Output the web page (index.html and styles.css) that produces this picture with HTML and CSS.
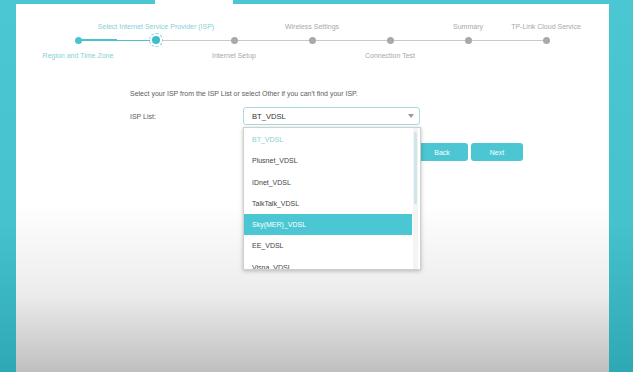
FILE: index.html
```html
<!DOCTYPE html>
<html lang="en">
<head>
    <meta charset="UTF-8">
    <meta name="viewport" content="width=device-width, initial-scale=1.0">
    <title>Quick Setup - ISP</title>
    <link rel="stylesheet" href="styles.css">
</head>
<body>
<div class="panel">
    <ol class="stepper">
        <li class="step done">
            <span class="label"></span>
            <span class="rail"><i class="dot"></i></span>
            <span class="label">Region and Time Zone</span>
        </li>
        <li class="step current">
            <span class="label">Select Internet Service Provider (ISP)</span>
            <span class="rail"><i class="dot"></i></span>
            <span class="label"></span>
        </li>
        <li class="step">
            <span class="label"></span>
            <span class="rail"><i class="dot"></i></span>
            <span class="label">Internet Setup</span>
        </li>
        <li class="step">
            <span class="label">Wireless Settings</span>
            <span class="rail"><i class="dot"></i></span>
            <span class="label"></span>
        </li>
        <li class="step">
            <span class="label"></span>
            <span class="rail"><i class="dot"></i></span>
            <span class="label">Connection Test</span>
        </li>
        <li class="step">
            <span class="label">Summary</span>
            <span class="rail"><i class="dot"></i></span>
            <span class="label"></span>
        </li>
        <li class="step">
            <span class="label">TP-Link Cloud Service</span>
            <span class="rail"><i class="dot"></i></span>
            <span class="label"></span>
        </li>
    </ol>

    <div class="form">
        <p class="hint">Select your ISP from the ISP List or select Other if you can't find your ISP.</p>
        <div class="field">
            <label class="field-label">ISP List:</label>
            <div class="select">
                <div class="select-box">
                    <span>BT_VDSL</span>
                    <svg class="caret" width="6" height="4" viewBox="0 0 6 4"><path d="M0 0h6L3 4z" fill="#9a9a9a"/></svg>
                </div>
                <div class="options">
                    <ul>
                        <li class="selected">BT_VDSL</li>
                        <li>Plusnet_VDSL</li>
                        <li>IDnet_VDSL</li>
                        <li>TalkTalk_VDSL</li>
                        <li class="hover">Sky(MER)_VDSL</li>
                        <li>EE_VDSL</li>
                        <li>Visna_VDSL</li>
                    </ul>
                    <div class="scrollbar"><span class="thumb"></span></div>
                </div>
            </div>
        </div>
        <div class="actions">
            <button class="btn">Back</button>
            <button class="btn">Next</button>
        </div>
    </div>
</div>
</body>
</html>
```

FILE: styles.css
```css
html, body {
    height: 100%;
}
body {
    margin: 0;
    overflow: hidden;
    font-family: "Liberation Sans", Arial, sans-serif;
    background: linear-gradient(to bottom, #4bc7d3 0%, #45c2ce 60%, #2ea8b4 100%);
}
.panel {
    position: relative;
    margin: 4px 24px 0 16px;
    height: calc(100% - 4px);
    background: linear-gradient(to bottom, #ffffff 0, #ffffff 200px, #ececec 290px, #bdbdbd 372px);
}
/* white tab above the current step */
.panel::before {
    content: "";
    position: absolute;
    top: -4px;
    left: 139px;
    width: 78px;
    height: 4px;
    background: #fff;
}

/* stepper */
.stepper {
    list-style: none;
    margin: 0 0 0 23px;
    padding: 18px 0 0;
    display: grid;
    grid-template-columns: repeat(7, 78px);
}
.step {
    display: flex;
    flex-direction: column;
    align-items: center;
}
.label {
    height: 10px;
    line-height: 10px;
    font-size: 7px;
    color: #a8a8a8;
    white-space: nowrap;
}
.rail {
    position: relative;
    align-self: stretch;
    height: 12px;
    margin: 2px 0 5px;
    display: flex;
    justify-content: center;
    align-items: center;
    background: linear-gradient(#c9c9c9, #c9c9c9) no-repeat center / 100% 1px;
}
.step:first-child .rail {
    background-size: 50% 1px;
    background-position: right center;
}
.step:last-child .rail {
    background-size: 50% 1px;
    background-position: left center;
}
.step.done .rail {
    background-image: linear-gradient(#4bc3cf, #4bc3cf);
    background-size: 50% 2px;
}
.step.current .rail {
    background-image: linear-gradient(to right, #4bc3cf 50%, #c9c9c9 50%);
}
.dot {
    width: 7px;
    height: 7px;
    border-radius: 50%;
    background: #a9a9a9;
}
.step.done .dot {
    background: #4bc3cf;
}
.step.current .dot {
    width: 8px;
    height: 8px;
    background: #3fbdca;
    box-shadow: 0 0 0 2px #fff;
    outline: 1px dashed #7fd2da;
    outline-offset: 2px;
    border-radius: 50%;
}
.step.done .label,
.step.current .label {
    color: #86d0d8;
}

/* form */
.form {
    margin-left: 114px;
    width: 393px;
}
.hint {
    margin: 28px 0 0;
    font-size: 7px;
    line-height: 10px;
    color: #5c5c5c;
}
.field {
    display: flex;
    align-items: center;
    margin-top: 8px;
}
.field-label {
    width: 113px;
    font-size: 7px;
    color: #5c5c5c;
}
.select {
    position: relative;
    width: 177px;
}
.select-box {
    height: 16px;
    border: 1px solid #a8dbe0;
    border-radius: 3px;
    background: #fff;
    display: flex;
    align-items: center;
    justify-content: space-between;
    padding: 0 5px 0 8px;
    font-size: 7.6px;
    color: #333;
}
.options {
    position: absolute;
    z-index: 2;
    top: 20px;
    left: 0;
    width: 176px;
    height: 141px;
    overflow: hidden;
    background: #fff;
    border: 1px solid #cfcfcf;
    box-shadow: 0 1px 4px rgba(0, 0, 0, 0.25);
}
.options ul {
    list-style: none;
    margin: 0;
    padding: 1px 8px 0 0;
}
.options li {
    height: 21.3px;
    line-height: 21.3px;
    padding-left: 8px;
    font-size: 7px;
    color: #444;
}
.options li.selected {
    color: #86d0d8;
}
.options li.hover {
    background: #4bc7d3;
    color: #fff;
}
.scrollbar {
    position: absolute;
    top: 0;
    right: 2px;
    bottom: 0;
    width: 5px;
    background: #f4f4f4;
}
.thumb {
    position: absolute;
    top: 4px;
    left: 1px;
    width: 3px;
    height: 72px;
    border-radius: 2px;
    background: #cde6ea;
}

.actions {
    display: flex;
    justify-content: flex-end;
    gap: 3px;
    margin-top: 18px;
}
.btn {
    width: 52px;
    height: 18px;
    border: none;
    border-radius: 3px;
    background: #4cc6d2;
    color: #fff;
    font-family: inherit;
    font-size: 7px;
    padding: 0;
}
```
